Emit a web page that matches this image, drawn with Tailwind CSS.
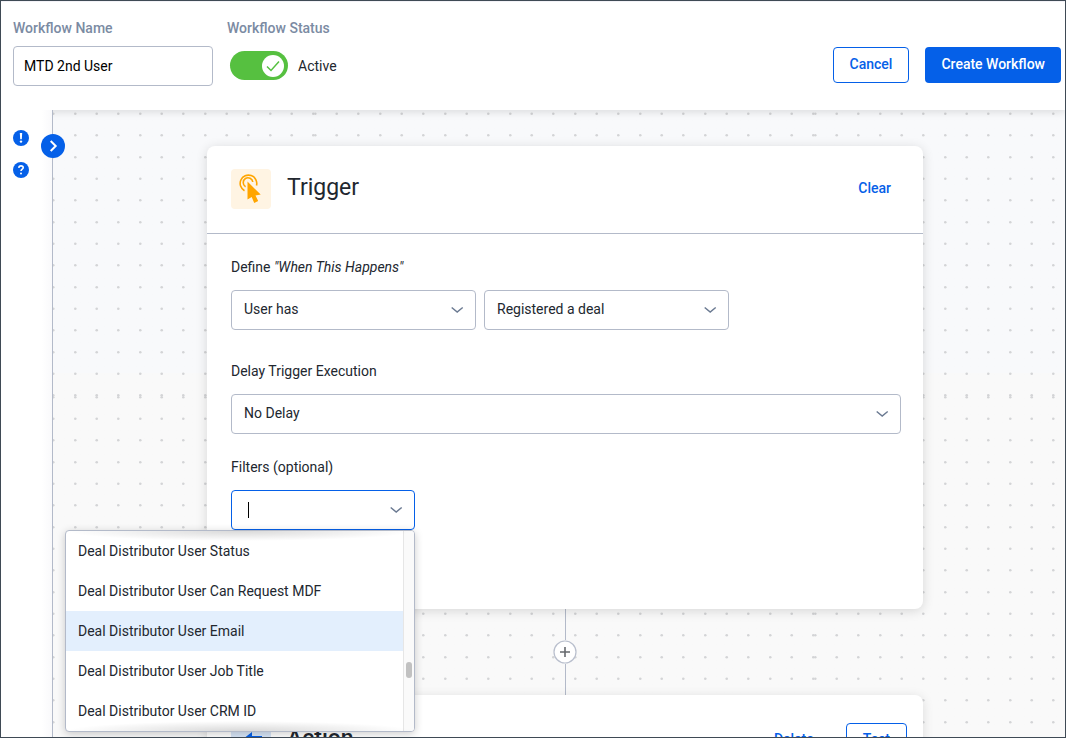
<!DOCTYPE html>
<html lang="en">
<head>
  <meta charset="UTF-8" />
  <meta name="viewport" content="width=device-width, initial-scale=1.0"/>
  <title>Workflow Builder</title>
  <script src="https://cdn.jsdelivr.net/npm/@tailwindcss/browser@4"></script>
</head>
<body class="flex h-screen flex-col overflow-hidden border border-[#3f4a55] bg-white font-[Roboto,sans-serif] text-sm text-[#22272f]">

  <!-- Header -->
  <header class="relative z-10 flex shrink-0 items-start justify-between border-t border-[#f3f2f7] bg-white pr-1 pb-6 pl-3 shadow-[0_2px_8px_rgba(0,0,0,0.12)]">
    <div class="flex gap-3.5 pt-4">
      <div class="flex w-[200px] flex-col gap-2">
        <label for="workflowName" class="leading-5 font-medium text-[#7b8ba3]">Workflow Name</label>
        <input id="workflowName" type="text" value="MTD 2nd User" class="h-10 w-full rounded border border-[#b3bac9] px-2.5 text-black outline-none"/>
      </div>
      <div class="flex flex-col gap-[13px]">
        <span class="leading-5 font-medium text-[#7b8ba3]">Workflow Status</span>
        <label class="flex items-center gap-2.5 pl-[3px]">
          <span class="relative flex">
            <input type="checkbox" checked class="h-[29px] w-[58px] appearance-none rounded-full bg-[#56c040]"/>
            <svg class="absolute top-1 right-1" width="22" height="22" viewBox="0 0 22 22" fill="none">
              <circle cx="11" cy="11" r="11" fill="#fff"/>
              <path d="M5 11.500l4 4 8-9" stroke="#56c040" stroke-width="1.500"/>
            </svg>
          </span>
          Active
        </label>
      </div>
    </div>
    <div class="flex gap-4 pt-[45px] font-medium">
      <button type="button" class="h-9 rounded border border-[#0560e8] px-4 pb-0.5 text-[#0560e8]">Cancel</button>
      <button type="button" class="h-9 rounded bg-[#0560e8] px-4 pb-0.5 text-white">Create Workflow</button>
    </div>
  </header>

  <div class="flex min-h-0 flex-1">
    <!-- Side rail -->
    <aside class="relative z-20 w-[52px] shrink-0 border-r border-[#b3bac9] bg-linear-to-r from-white from-80% to-[#f9f9fb]">
      <div class="flex flex-col items-start gap-4 pt-5 pl-3">
        <button type="button" aria-label="Alerts">
          <svg width="16" height="16" viewBox="0 0 16 16"><circle cx="8" cy="8" r="8" fill="#0560e8"/><path d="M6.800 3h2.400l-.4 6.200H7.200z" fill="#fff"/><circle cx="8" cy="11.600" r="1.200" fill="#fff"/></svg>
        </button>
        <button type="button" aria-label="Help">
          <svg width="16" height="16" viewBox="0 0 16 16" fill="none"><circle cx="8" cy="8" r="8" fill="#0560e8"/><path d="M5.800 5.900C5.900 4.500 6.800 3.900 8 3.900c1.300 0 2.200.7 2.200 1.800C10.200 7.200 8 7.300 8 9.100" stroke="#fff" stroke-width="1.600"/><circle cx="8" cy="11.500" r="1" fill="#fff"/></svg>
        </button>
      </div>
      <button type="button" aria-label="Expand panel" class="absolute top-6 -right-[13px]">
        <svg width="24" height="24" viewBox="0 0 24 24" fill="none"><circle cx="12" cy="12" r="12" fill="#0560e8"/><path d="M9.700 7l5 5-5 5" stroke="#fff" stroke-width="2"/></svg>
      </button>
    </aside>

    <!-- Canvas -->
    <main class="relative min-w-0 flex-1 bg-linear-to-b from-[#f8f9fb] from-42% to-[#f9f9f9] to-42%">
      <svg class="absolute inset-0 h-full w-full" aria-hidden="true">
        <defs>
          <pattern id="dots" width="65" height="65" patternUnits="userSpaceOnUse">
            <g fill="#d3d4d6">
              <circle cx="1.300" cy="1.300" r="1.300"/><circle cx="22.700" cy="1.300" r="1.300"/><circle cx="44.300" cy="1.300" r="1.300"/>
              <circle cx="1.300" cy="22.700" r="1.300"/><circle cx="22.700" cy="22.700" r="1.300"/><circle cx="44.300" cy="22.700" r="1.300"/>
              <circle cx="1.300" cy="44.300" r="1.300"/><circle cx="22.700" cy="44.300" r="1.300"/><circle cx="44.300" cy="44.300" r="1.300"/>
            </g>
          </pattern>
          <pattern id="tile" x="261" y="286" width="500" height="500" patternUnits="userSpaceOnUse">
            <rect width="500" height="500" fill="url(#dots)"/>
          </pattern>
        </defs>
        <rect width="100%" height="100%" fill="url(#tile)"/>
      </svg>

      <div class="relative flex flex-col items-center pt-9 pl-3">
        <!-- Trigger card -->
        <section class="relative z-10 w-full max-w-[716px] rounded-lg bg-white pb-[79px] shadow-[0_2px_12px_rgba(0,0,0,0.14)]">
          <div class="flex items-center border-b border-[#b3bac9] px-6 pt-[23px] pb-6">
            <svg class="rounded" width="40" height="40" viewBox="0 0 40 40" fill="none">
              <rect width="40" height="40" fill="#fff4e3"/>
              <path d="M13.500 21.700A8.300 8.300 0 1 1 25.500 16.500" stroke="#ffa500" stroke-width="1.600"/>
              <path d="M14.600 17.700A4.800 4.800 0 1 1 21.800 13" stroke="#ffa500" stroke-width="1.600"/>
              <path d="M16.500 12.500v18l4.200-2.600 2.500 6 4-1.800-2.700-5.700 5.200-.8z" fill="#ffa500"/>
            </svg>
            <h2 class="ml-4 flex-1 pb-0.5 text-[23px] leading-8">Trigger</h2>
            <button type="button" class="px-2 pb-0.5 font-medium text-[#0560e8]">Clear</button>
          </div>

          <div class="px-6 pt-[23px]">
            <label for="subject" class="block leading-5">Define <em>"When This Happens"</em></label>
            <div class="mt-[13px] flex gap-2">
              <div class="relative w-[245px]">
                <select id="subject" class="h-10 w-full appearance-none rounded border border-[#b3bac9] bg-white px-3 pb-0.5">
                  <option>User has</option>
                </select>
                <svg class="pointer-events-none absolute top-4 right-3" width="13" height="8" viewBox="0 0 13 8" fill="none"><path d="M.7 1.500l5.500 4.500L11.700 1.500" stroke="#6b7a92" stroke-width="1.500"/></svg>
              </div>
              <div class="relative w-[245px]">
                <select aria-label="Event" class="h-10 w-full appearance-none rounded border border-[#b3bac9] bg-white px-3 pb-0.5">
                  <option>Registered a deal</option>
                </select>
                <svg class="pointer-events-none absolute top-4 right-3" width="13" height="8" viewBox="0 0 13 8" fill="none"><path d="M.7 1.500l5.500 4.500L11.700 1.500" stroke="#6b7a92" stroke-width="1.500"/></svg>
              </div>
            </div>

            <label for="delay" class="mt-[31px] block leading-5">Delay Trigger Execution</label>
            <div class="relative mt-[13px] -mr-0.5">
              <select id="delay" class="h-10 w-full appearance-none rounded border border-[#b3bac9] bg-white px-3 pb-0.5">
                <option>No Delay</option>
              </select>
              <svg class="pointer-events-none absolute top-4 right-3" width="13" height="8" viewBox="0 0 13 8" fill="none"><path d="M.7 1.500l5.500 4.500L11.700 1.500" stroke="#6b7a92" stroke-width="1.500"/></svg>
            </div>

            <label for="filters" class="mt-[23px] block leading-5">Filters (optional)</label>
            <div class="relative z-30 mt-[13px] w-[184px]">
              <input id="filters" type="text" role="combobox" aria-expanded="true" aria-controls="filterMenu" class="block h-10 w-full rounded border border-[#0560e8] bg-white px-4 caret-transparent outline-none"/>
              <span class="absolute top-3 left-[17px] h-4 w-px bg-black"></span>
              <svg class="pointer-events-none absolute top-4 right-3" width="13" height="8" viewBox="0 0 13 8" fill="none"><path d="M.7 1.500l5.500 4.500L11.700 1.500" stroke="#6b7a92" stroke-width="1.500"/></svg>

              <!-- Filter options -->
              <div class="absolute top-full right-0 flex w-[350px] overflow-hidden rounded border border-[#b3bac9] bg-white shadow-[0_2px_8px_rgba(0,0,0,0.2)]">
                <ul id="filterMenu" role="listbox" class="flex-1 leading-10">
                  <li role="option" class="px-3">Deal Distributor User Status</li>
                  <li role="option" class="px-3">Deal Distributor User Can Request MDF</li>
                  <li role="option" aria-selected="true" class="bg-[#e3effd] px-3">Deal Distributor User Email</li>
                  <li role="option" class="px-3">Deal Distributor User Job Title</li>
                  <li role="option" class="px-3">Deal Distributor User CRM ID</li>
                </ul>
                <div class="w-[11px] border-l border-[#e6e6e6] bg-[#fafafa] pt-[131px] pl-0.5">
                  <div class="h-4 w-1.5 rounded-full bg-[#c1c1c1]"></div>
                </div>
                <div class="absolute inset-x-0 top-0 h-2.5 bg-[radial-gradient(farthest-side_at_50%_0,rgba(0,0,0,0.15),transparent)]"></div>
                <div class="absolute inset-x-0 bottom-0 h-2.5 bg-[radial-gradient(farthest-side_at_50%_100%,rgba(0,0,0,0.15),transparent)]"></div>
              </div>
            </div>
          </div>
        </section>

        <!-- Connector -->
        <div class="flex flex-col items-center">
          <div class="h-[31px] w-px bg-[#b3bac9]"></div>
          <button type="button" aria-label="Add step" class="rounded-full">
            <svg width="24" height="24" viewBox="0 0 24 24" fill="none"><circle cx="12" cy="12" r="11" fill="#fff" stroke="#b9bfcd" stroke-width="1.200"/><path d="M7 12h10M12 7v10" stroke="#66696e" stroke-width="1.600"/></svg>
          </button>
          <div class="h-[31px] w-px bg-[#b3bac9]"></div>
        </div>

        <!-- Action card -->
        <section class="w-full max-w-[716px] rounded-lg bg-white shadow-[0_2px_12px_rgba(0,0,0,0.12)]">
          <div class="flex items-center px-6 pt-[26px] pb-6">
            <svg class="rounded" width="40" height="40" viewBox="0 0 40 40" fill="none">
              <rect width="40" height="40" fill="#d8e6f8"/>
              <path d="M12 18l9-7v4h10v6H21v4z" fill="#0560e8"/>
            </svg>
            <h2 class="ml-4 flex-1 pb-1 text-[23px] leading-8 font-medium">Action</h2>
            <button type="button" class="px-4 pb-1 font-medium text-[#0560e8]">Delete</button>
            <button type="button" class="-mr-2 ml-4 h-9 rounded border border-[#0560e8] px-4 pb-1 font-medium text-[#0560e8]">Test</button>
          </div>
        </section>
      </div>
    </main>
  </div>
</body>
</html>
